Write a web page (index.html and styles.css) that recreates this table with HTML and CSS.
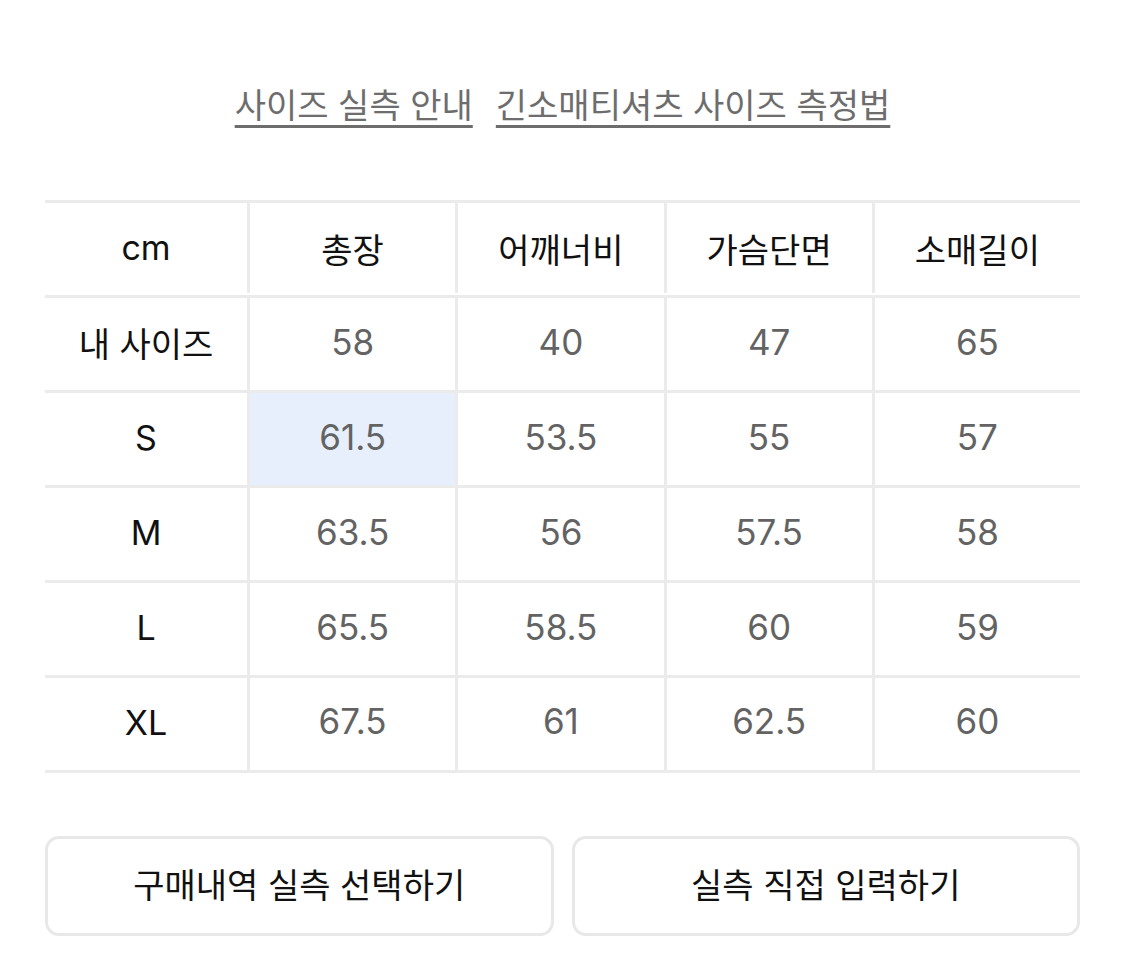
FILE: index.html
```html
<!DOCTYPE html>
<html lang="ko">
<head>
<meta charset="utf-8">
<link rel="stylesheet" href="styles.css">
</head>
<body>
<div class="page">
  <nav class="links">
    <a class="link" href="#">사이즈 실측 안내</a>
    <a class="link" href="#">긴소매티셔츠 사이즈 측정법</a>
  </nav>

  <div class="size-table">
    <div class="fixed-col">
      <div class="fcell head">cm</div>
      <div class="fcell head">내 사이즈</div>
      <div class="fcell head">S</div>
      <div class="fcell head">M</div>
      <div class="fcell head">L</div>
      <div class="fcell head">XL</div>
    </div>
    <div class="grid">
      <div class="cell head top">총장</div>
      <div class="cell head top">어깨너비</div>
      <div class="cell head top">가슴단면</div>
      <div class="cell head top">소매길이</div>

      <div class="cell">58</div>
      <div class="cell">40</div>
      <div class="cell">47</div>
      <div class="cell">65</div>

      <div class="cell active">61.5</div>
      <div class="cell">53.5</div>
      <div class="cell">55</div>
      <div class="cell">57</div>

      <div class="cell">63.5</div>
      <div class="cell">56</div>
      <div class="cell">57.5</div>
      <div class="cell">58</div>

      <div class="cell">65.5</div>
      <div class="cell">58.5</div>
      <div class="cell">60</div>
      <div class="cell">59</div>

      <div class="cell last">67.5</div>
      <div class="cell last">61</div>
      <div class="cell last">62.5</div>
      <div class="cell last">60</div>
    </div>
  </div>

  <div class="actions">
    <button class="btn">구매내역 실측 선택하기</button>
    <button class="btn">실측 직접 입력하기</button>
  </div>
</div>
</body>
</html>
```
FILE: styles.css
```css
* { box-sizing: border-box; }
html, body {
  margin: 0;
  padding: 0;
  background: #ffffff;
}
body {
  font-family: Inter, "Noto Sans CJK KR", sans-serif;
  color: #111;
}
.page {
  width: 1125px;
  padding: 78px 45px 0 45px;
}
.links {
  display: flex;
  justify-content: center;
  gap: 23px;
  height: 50px;
  align-items: center;
}
.link {
  font-family: Inter, "Noto Sans CJK KR", sans-serif;
  font-size: 34px;
  color: #6d6d6d;
  text-decoration: underline;
  text-decoration-thickness: 3px;
  text-underline-offset: 7px;
}
.size-table {
  display: flex;
  margin-top: 72px;
}
.fixed-col {
  width: 202px;
  flex: none;
  display: flex;
  flex-direction: column;
}
.fcell {
  height: 95px;
  border-top: 3px solid #ebebeb;
  display: flex;
  align-items: center;
  justify-content: center;
  padding-bottom: 4px;
}
.fcell:last-child {
  height: 98px;
  border-bottom: 3px solid #ebebeb;
}
.head {
  font-size: 34px;
  color: #111;
  font-weight: 400;
}
.grid {
  flex: 1;
  display: grid;
  grid-template-columns: repeat(4, 1fr);
  grid-auto-rows: 95px;
}
.cell {
  border-top: 3px solid #ebebeb;
  border-left: 3px solid #ebebeb;
  display: flex;
  align-items: center;
  justify-content: center;
  font-size: 35px;
  color: #636363;
  padding-bottom: 4px;
}
.cell.top {
  height: 93px;
  color: #111;
  font-size: 34px;
  padding-bottom: 0;
}
.cell.last {
  height: 98px;
  border-bottom: 3px solid #ebebeb;
  padding-bottom: 7px;
}
.cell.active {
  background: #e8effc;
}
.grid .cell:nth-child(-n+4) { align-self: start; }
.actions {
  display: flex;
  gap: 18px;
  margin-top: 63px;
}
.btn {
  flex: 1;
  height: 100px;
  padding: 0 0 6px 0;
  background: #fff;
  border: 3px solid #e8e8e8;
  border-radius: 14px;
  font-family: Inter, "Noto Sans CJK KR", sans-serif;
  font-size: 34px;
  font-weight: 400;
  color: #111;
  cursor: pointer;
}
```
